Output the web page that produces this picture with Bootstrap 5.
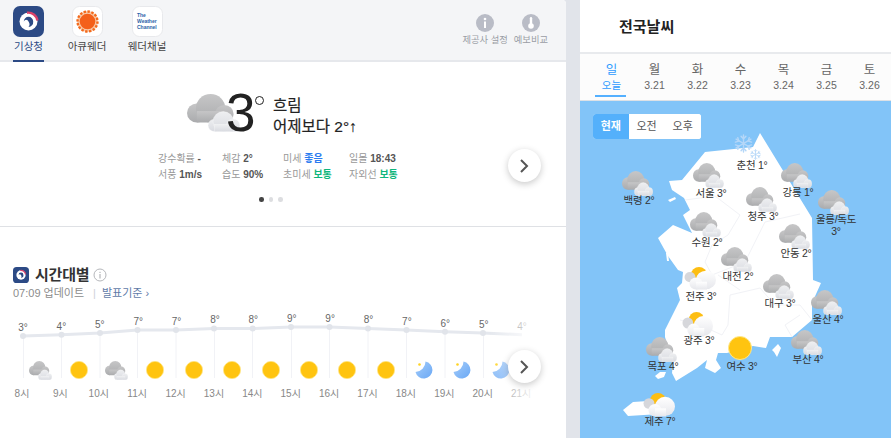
<!doctype html>
<html lang="ko">
<head>
<meta charset="utf-8">
<title>날씨</title>
<link href="https://cdn.jsdelivr.net/npm/bootstrap@5.3.0/dist/css/bootstrap.min.css" rel="stylesheet">
<style>
html,body{height:100%;overflow:hidden}
body{font-family:"Liberation Sans","Noto Sans CJK KR",sans-serif;background:#e1e4ea;color:#222}
.shell{height:438px;width:891px;overflow:hidden}
.leftp{width:566px;background:#fff;border-top-right-radius:4px;overflow:hidden;flex:none}
.rightp{width:311px;margin-left:14px;background:#fff;flex:none}
.topb{height:62px;background:#f4f5f7;border-bottom:2px solid #e6e8ec;position:relative}
.tabi{color:#444;font-size:10.5px;line-height:13px;white-space:nowrap;padding-top:6px;height:60px}
.tabi svg{display:block;margin-bottom:3px}
.t1{width:31px;margin-left:13px;color:#2c4a85;border-bottom:2px solid #2c4a85;height:62px}
.t2{width:40px;margin-left:23px}
.t3{width:40px;margin-left:20px}
.toolr{margin-left:auto;padding-right:18px;gap:6px}
.tooli{color:#9a9da5;font-size:9.3px;line-height:12px;white-space:nowrap;padding-top:14px}
.tooli svg{display:block;margin-bottom:2px}
.hero{height:165px;border-bottom:1px solid #dfe1e5;position:relative}
.nowrow{padding:32px 0 0 187px;height:89px}
.bigt{font-size:53px;line-height:48px;margin:-5px 0 0 -14px;width:31px;font-weight:400;letter-spacing:-1px}
.deg{width:9px;height:9px;border:1.5px solid #222;border-radius:50%;margin:2px 0 0 -2px;flex:none}
.nowtx{margin-left:9px;font-size:15.5px;line-height:21px;color:#222;padding-top:1px;-webkit-text-stroke:.2px #222;white-space:nowrap}
.statg{padding-left:158px;font-size:10px;line-height:16px;color:#999;gap:0}
.statg b{color:#555;font-weight:700}
.sc1{width:64px}.sc2{width:61px}.sc3{width:66px}
.gd{color:#2b7cf0!important}.ok{color:#0fb67c!important}
.dots{gap:5px;margin:14px 0 0 259px}
.dots i{width:4.5px;height:4.5px;border-radius:50%;background:#dcdde0;display:block}
.dots i:first-child{background:#444}
.roundb{width:33px;height:33px;padding:0;border-radius:50%;background:#fff;border:0;box-shadow:0 2px 7px rgba(0,0,0,.22);position:absolute;display:flex;align-items:center;justify-content:center;z-index:3}
.hb1{left:507.5px;top:87px}
.hb2{left:507.5px;top:39px}
.hourp{padding-top:38px}
.hhead{padding-left:13px;height:20px}
.htitle{font-size:15px;font-weight:700;color:#333;margin-left:6px;letter-spacing:-.2px}
.upd{padding-left:13px;font-size:11px;color:#8c8c8c;line-height:14px;margin-top:1px}
.upd span{color:#cfd2d8;margin:0 6px 0 9px}
.upd a{color:#5f7ba8;text-decoration:none}
.chart{position:relative;height:105px;margin-top:11px;width:566px;overflow:hidden}
.chart>svg{position:absolute;left:0;top:0}
.temps{position:relative;height:50px;padding-left:3.8px}
.hc{width:38.4px;flex:none;text-align:center;font-size:10px;color:#666;line-height:12px}
.icons{position:relative;height:18px;padding-left:21px}
.icons svg{display:block;margin:0 auto}
.times{position:relative;margin-top:9px;padding-left:2.8px}
.times .hc{color:#888}
.fadeo{position:absolute;left:490px;top:0;width:50px;height:105px;background:linear-gradient(90deg,rgba(255,255,255,0),rgba(255,255,255,.85) 80%);z-index:2}
.rhead{height:54px;border-bottom:2px solid #e8eaed;padding-left:39px;font-size:15px;font-weight:700;color:#222;line-height:54px}
.dayb{height:47px;background:#fcfcfc;padding-left:10px;border-bottom:1px solid #dde1e6}
.dayi{width:43px;text-align:center;color:#666;font-size:12.5px;line-height:15px;padding-top:9px;position:relative}
.dayi small{display:block;font-size:10.5px;line-height:14px;color:#666}
.dayi.act,.dayi.act small{color:#2f9bff}
.dayi.act::after{content:"";position:absolute;left:5px;right:7px;top:41px;height:1.5px;background:#54b0ff}
.mapw{position:relative;height:337px;background:#82c4f8;overflow:hidden}
.mapw>svg.base{position:absolute;left:0;top:0}
.seg{position:absolute;left:13px;top:13px;height:25px;background:#fff;border-radius:3px}
.seg .btn{font-size:11px;padding:0;width:36.7px;height:25px;line-height:25px;border:0;border-right:1px solid #eee;border-radius:0;color:#555;background:#fff}
.seg .btn:last-child{border-right:0;border-radius:0 3px 3px 0}
.seg .btn.on{background:#54b0fb;color:#fff;font-weight:700;border-radius:3px 0 0 3px}
.ico{position:absolute}
.lab{position:absolute;width:60px;text-align:center;font-size:10.5px;line-height:12px;color:#333;letter-spacing:-.3px;margin-top:1px}
</style>
</head>
<body>
<svg width="0" height="0" class="position-absolute">
<defs>
<linearGradient id="g1" x1="0" y1="0" x2="0" y2="1"><stop offset="0" stop-color="#c6c6c7"/><stop offset="1" stop-color="#aaabad"/></linearGradient>
<linearGradient id="g2" x1="0" y1="0" x2="0" y2="1"><stop offset="0" stop-color="#eeeff1"/><stop offset="1" stop-color="#d8dae0"/></linearGradient>
<linearGradient id="g3" x1="0" y1="0" x2="0" y2="1"><stop offset="0" stop-color="#ffffff"/><stop offset="1" stop-color="#e6e7ec"/></linearGradient>
<linearGradient id="g4" x1="0" y1="0" x2="1" y2="1"><stop offset="0" stop-color="#a5cdfa"/><stop offset="1" stop-color="#6aa8f5"/></linearGradient>
<symbol id="cl" viewBox="0 0 54 40" preserveAspectRatio="none">
<g fill="url(#g1)"><circle cx="10" cy="20" r="10"/><circle cx="24" cy="15" r="15"/><circle cx="38" cy="21" r="9.500"/><rect x="10" y="18" width="28" height="12"/></g>
<g fill="url(#g2)" stroke="#fff" stroke-opacity=".5" stroke-width=".6"><circle cx="28" cy="33" r="6.500"/><circle cx="37" cy="29" r="10.500"/><circle cx="47" cy="33" r="6.800"/><rect x="28" y="32" width="19" height="7.700"/></g>
</symbol>
<symbol id="sc" viewBox="0 0 32 25" preserveAspectRatio="none">
<circle cx="15" cy="8" r="8" fill="#fdbe12"/><circle cx="6" cy="11" r="5.500" fill="#d6d7db"/>
<g fill="url(#g3)"><circle cx="22" cy="14" r="10"/><circle cx="12" cy="18" r="6.500"/><rect x="12" y="16" width="11" height="8.500"/></g>
</symbol>
<symbol id="sn" viewBox="0 0 20 20"><circle cx="10" cy="10" r="9.600" fill="#ffc410" stroke="#ffe88a" stroke-width=".8"/></symbol>
<symbol id="mn" viewBox="0 0 18 18"><path d="M10.500 .5A8.600 8.600 0 1 1 .5 11 10.500 10.500 0 0 0 10.500 .5Z" fill="url(#g4)"/><circle cx="4.500" cy="3.500" r="1.300" fill="#ffd321"/></symbol>
<symbol id="fl" viewBox="0 0 20 20"><g stroke="#b5d7f8" stroke-width="1.500" stroke-linecap="round"><path d="M10 1v18M2.200 5.500l15.600 9M2.200 14.500l15.600-9"/><path d="M7.500 2.500 10 5l2.500-2.500M7.500 17.500 10 15l2.500 2.500M1.500 8.500 5 7.500 4 4M18.500 11.500 15 12.500l1 3.500M1.500 11.500 5 12.500 4 16M18.500 8.500 15 7.500l1-3.500" fill="none"/></g></symbol>
<symbol id="kma" viewBox="0 0 31 31"><rect width="31" height="31" rx="7" fill="#2c4a85"/><circle cx="15.500" cy="15.500" r="9" fill="#fff"/><path d="M14 6.800A9 9 0 0 1 24.400 14.500" fill="none" stroke="#d9426a" stroke-width="2.400"/><path d="M10.800 15.500A4.700 4.700 0 0 1 20.200 15.500 5 5 0 0 1 15.500 21 4.500 4.500 0 0 0 15.500 15.500 2.500 2.500 0 0 0 10.800 15.500Z" fill="#2c4a85"/></symbol>
</defs>
</svg>
<div class="shell d-flex">
 <div class="leftp">
  <div class="topb d-flex">
   <div class="tabi t1 d-flex flex-column align-items-center"><svg width="31" height="31"><use href="#kma"/></svg>기상청</div>
   <div class="tabi t2 d-flex flex-column align-items-center">
    <svg width="31" height="31" viewBox="0 0 31 31"><rect x=".5" y=".5" width="30" height="30" rx="7" fill="#fff" stroke="#e8e9ec"/><circle cx="15.500" cy="15.500" r="10.500" fill="#f8c9a8"/><circle cx="15.500" cy="15.500" r="10" fill="none" stroke="#f46a1c" stroke-width="2.400" stroke-dasharray="2.400 1.500"/><circle cx="15.500" cy="15.500" r="7.800" fill="#f4601a"/></svg>아큐웨더</div>
   <div class="tabi t3 d-flex flex-column align-items-center">
    <svg width="31" height="31" viewBox="0 0 31 31"><rect x=".5" y=".5" width="30" height="30" rx="7" fill="#fff" stroke="#e8e9ec"/><text x="5" y="10.500" font-size="5" font-weight="700" fill="#2a5fa8" font-family="Liberation Sans">The</text><text x="5" y="16.500" font-size="5" font-weight="700" fill="#2a5fa8" font-family="Liberation Sans">Weather</text><text x="5" y="22.500" font-size="5" font-weight="700" fill="#2a5fa8" font-family="Liberation Sans">Channel</text></svg>웨더채널</div>
   <div class="toolr d-flex">
    <div class="tooli d-flex flex-column align-items-center"><svg width="18" height="18" viewBox="0 0 18 18"><circle cx="9" cy="9" r="9" fill="#b9bcc6"/><circle cx="9" cy="5" r="1.300" fill="#fff"/><rect x="8" y="7.500" width="2" height="6.500" fill="#fff"/></svg>제공사 설정</div>
    <div class="tooli d-flex flex-column align-items-center"><svg width="18" height="18" viewBox="0 0 18 18"><circle cx="9" cy="9" r="9" fill="#b9bcc6"/><rect x="7.800" y="3" width="2.400" height="8" rx="1.200" fill="#fff"/><circle cx="9" cy="12" r="2.800" fill="#fff"/></svg>예보비교</div>
   </div>
  </div>
  <div class="hero">
   <div class="nowrow d-flex align-items-start">
    <svg width="53" height="38"><use href="#cl"/></svg>
    <div class="bigt">3</div><div class="deg"></div>
    <div class="nowtx">흐림<br>어제보다 2°↑</div>
   </div>
   <div class="statg d-flex">
    <div class="sc1"><div>강수확률 <b>-</b></div><div>서풍 <b>1m/s</b></div></div>
    <div class="sc2"><div>체감 <b>2°</b></div><div>습도 <b>90%</b></div></div>
    <div class="sc3"><div>미세 <b class="gd">좋음</b></div><div>초미세 <b class="ok">보통</b></div></div>
    <div><div>일몰 <b>18:43</b></div><div>자외선 <b class="ok">보통</b></div></div>
   </div>
   <div class="dots d-flex"><i></i><i></i><i></i></div>
   <button class="roundb hb1" aria-label="다음"><svg width="10" height="16" viewBox="0 0 10 16"><path d="M2 2l6 6-6 6" fill="none" stroke="#555" stroke-width="2"/></svg></button>
  </div>
  <div class="hourp">
   <div class="hhead d-flex align-items-center">
    <svg width="16" height="16"><use href="#kma"/></svg>
    <span class="htitle">시간대별</span>
    <svg class="ms-1" width="14" height="14" viewBox="0 0 14 14"><circle cx="7" cy="7" r="6" fill="none" stroke="#b5b7bb"/><rect x="6.500" y="6" width="1" height="4.500" fill="#a5a7ab"/><rect x="6.500" y="3.800" width="1" height="1.200" fill="#a5a7ab"/></svg>
   </div>
   <div class="upd">07:09 업데이트<span>|</span><a href="#">발표기준 ›</a></div>
   <div class="chart">
    <svg width="566" height="105" viewBox="0 310 566 105">
     <g stroke="#f1f2f6" fill="none"><path d="M23.500 335V377M61.500 334V377M100 332V377M137.500 329V377M176 329V377M214.500 327V377M252.500 327V377M291.500 326V377M329.500 326V377M368 327V377M406.500 329V377M445 331V377M483.500 332V377"/></g>
     <path d="M23 335L61.500 333.700 100 332 137.500 329 176 329 214 327.500 252.700 327.500 291 326 329.500 326 368 327.500 406.500 329 445 330.700 483 332 522 333.700" fill="none" stroke="#e5e8ee" stroke-width="3"/>
     <g fill="#e1e4ea"><circle cx="23" cy="335" r="3"/><circle cx="61.500" cy="333.700" r="3"/><circle cx="100" cy="332" r="3"/><circle cx="137.500" cy="329" r="3"/><circle cx="176" cy="329" r="3"/><circle cx="214" cy="327.500" r="3"/><circle cx="252.700" cy="327.500" r="3"/><circle cx="291" cy="326" r="3"/><circle cx="329.500" cy="326" r="3"/><circle cx="368" cy="327.500" r="3"/><circle cx="406.500" cy="329" r="3"/><circle cx="445" cy="330.700" r="3"/><circle cx="483" cy="332" r="3"/></g>
    </svg>
    <div class="temps d-flex">
     <div class="hc" style="margin-top:11px">3°</div><div class="hc" style="margin-top:10px">4°</div><div class="hc" style="margin-top:8px">5°</div><div class="hc" style="margin-top:5px">7°</div><div class="hc" style="margin-top:5px">7°</div><div class="hc" style="margin-top:3px">8°</div><div class="hc" style="margin-top:3px">8°</div><div class="hc" style="margin-top:2px">9°</div><div class="hc" style="margin-top:2px">9°</div><div class="hc" style="margin-top:3px">8°</div><div class="hc" style="margin-top:5px">7°</div><div class="hc" style="margin-top:7px">6°</div><div class="hc" style="margin-top:8px">5°</div><div class="hc" style="margin-top:10px">4°</div>
    </div>
    <div class="icons d-flex">
     <div class="hc"><svg width="23" height="19"><use href="#cl"/></svg></div>
     <div class="hc"><svg width="18" height="18"><use href="#sn"/></svg></div>
     <div class="hc"><svg width="23" height="19"><use href="#cl"/></svg></div>
     <div class="hc"><svg width="18" height="18"><use href="#sn"/></svg></div>
     <div class="hc"><svg width="18" height="18"><use href="#sn"/></svg></div>
     <div class="hc"><svg width="18" height="18"><use href="#sn"/></svg></div>
     <div class="hc"><svg width="18" height="18"><use href="#sn"/></svg></div>
     <div class="hc"><svg width="18" height="18"><use href="#sn"/></svg></div>
     <div class="hc"><svg width="18" height="18"><use href="#sn"/></svg></div>
     <div class="hc"><svg width="18" height="18"><use href="#sn"/></svg></div>
     <div class="hc"><svg width="18" height="18"><use href="#mn"/></svg></div>
     <div class="hc"><svg width="18" height="18"><use href="#mn"/></svg></div>
     <div class="hc"><svg width="18" height="18"><use href="#mn"/></svg></div>
    </div>
    <div class="times d-flex">
     <div class="hc">8시</div><div class="hc">9시</div><div class="hc">10시</div><div class="hc">11시</div><div class="hc">12시</div><div class="hc">13시</div><div class="hc">14시</div><div class="hc">15시</div><div class="hc">16시</div><div class="hc">17시</div><div class="hc">18시</div><div class="hc">19시</div><div class="hc">20시</div><div class="hc">21시</div>
    </div>
    <div class="fadeo"></div>
    <button class="roundb hb2" aria-label="다음"><svg width="10" height="16" viewBox="0 0 10 16"><path d="M2 2l6 6-6 6" fill="none" stroke="#555" stroke-width="2"/></svg></button>
   </div>
  </div>
 </div>
 <div class="rightp">
  <div class="rhead">전국날씨</div>
  <div class="dayb d-flex">
   <div class="dayi act">일<small>오늘</small></div>
   <div class="dayi">월<small>3.21</small></div>
   <div class="dayi">화<small>3.22</small></div>
   <div class="dayi">수<small>3.23</small></div>
   <div class="dayi">목<small>3.24</small></div>
   <div class="dayi">금<small>3.25</small></div>
   <div class="dayi">토<small>3.26</small></div>
  </div>
  <div class="mapw">
   <svg class="base" width="311" height="337" viewBox="580 101 311 337">
    <g fill="#fff">
     <path d="M760 133L812 218 813 280 821 283 812 303 812 320 792 337 770 337 766 348 753 346 727 353 718 353 716 360 721 368 715 373 705 368 707 360 697 368 676 381 672 373 673 363 665 337 665 330 680 300 677 288 682 283 683 272 678 270 668 256 658 238 673 225 692 233 683 215 690 210 684 198 672 190 669 181 682 180 705 152 753 147Z"/>
     <path d="M623 410L633 402 648 401 673 403 672 410 660 414 628 416Z"/>
     <path d="M772 350L778 344 781 348 777 357 774 352Z"/>
     <path d="M655 376L660 372 666 372 664 377 658 379Z"/>
     <path d="M668 200L675 197 676 199 670 202Z"/>
     <path d="M666 253L668 253 669 261 667 261Z"/>
    </g>
    <g fill="none" stroke="#f1f2f6"><path d="M685 200L715 196 740 215 728 235 712 245 705 262 712 275 745 262 765 222 800 214"/><path d="M730 295L728 325 722 335 700 325 680 320M730 295L760 288 775 305 800 305 812 320M792 337L785 325 800 315"/><path d="M718 275L740 290"/></g>
   </svg>
   <div class="seg btn-group" role="group"><button class="btn on">현재</button><button class="btn">오전</button><button class="btn">오후</button></div>

   <svg class="ico" style="left:154px;top:33px" width="19" height="19"><use href="#fl"/></svg>
   <svg class="ico" style="left:170px;top:48px" width="11" height="11"><use href="#fl"/></svg>
   <svg class="ico" style="left:42px;top:70px" width="31" height="25"><use href="#cl"/></svg>
   <svg class="ico" style="left:113px;top:62px" width="31" height="25"><use href="#cl"/></svg>
   <svg class="ico" style="left:201px;top:62px" width="31" height="25"><use href="#cl"/></svg>
   <svg class="ico" style="left:166px;top:86px" width="31" height="25"><use href="#cl"/></svg>
   <svg class="ico" style="left:238px;top:89px" width="31" height="25"><use href="#cl"/></svg>
   <svg class="ico" style="left:110px;top:111px" width="31" height="25"><use href="#cl"/></svg>
   <svg class="ico" style="left:199px;top:123px" width="31" height="25"><use href="#cl"/></svg>
   <svg class="ico" style="left:141px;top:146px" width="31" height="25"><use href="#cl"/></svg>
   <svg class="ico" style="left:104px;top:166px" width="32" height="23"><use href="#sc"/></svg>
   <svg class="ico" style="left:183px;top:173px" width="31" height="25"><use href="#cl"/></svg>
   <svg class="ico" style="left:231px;top:189px" width="31" height="25"><use href="#cl"/></svg>
   <svg class="ico" style="left:102px;top:211px" width="31" height="25"><use href="#sc"/></svg>
   <svg class="ico" style="left:211px;top:229px" width="31" height="25"><use href="#cl"/></svg>
   <svg class="ico" style="left:66px;top:236px" width="31" height="25"><use href="#cl"/></svg>
   <svg class="ico" style="left:148px;top:235px" width="24" height="24"><use href="#sn"/></svg>
   <svg class="ico" style="left:63px;top:292px" width="32" height="24"><use href="#sc"/></svg>

   <div class="lab" style="left:142px;top:57px">춘천 1°</div>
   <div class="lab" style="left:29px;top:92px">백령 2°</div>
   <div class="lab" style="left:101px;top:85px">서울 3°</div>
   <div class="lab" style="left:188px;top:84px">강릉 1°</div>
   <div class="lab" style="left:153px;top:108px">청주 3°</div>
   <div class="lab" style="left:226px;top:111px">울릉/독도<br>3°</div>
   <div class="lab" style="left:97px;top:134px">수원 2°</div>
   <div class="lab" style="left:186px;top:145px">안동 2°</div>
   <div class="lab" style="left:128px;top:168px">대전 2°</div>
   <div class="lab" style="left:91px;top:188px">전주 3°</div>
   <div class="lab" style="left:170px;top:195px">대구 3°</div>
   <div class="lab" style="left:218px;top:211px">울산 4°</div>
   <div class="lab" style="left:89px;top:232px">광주 3°</div>
   <div class="lab" style="left:132px;top:258px">여수 3°</div>
   <div class="lab" style="left:198px;top:251px">부산 4°</div>
   <div class="lab" style="left:53px;top:258px">목포 4°</div>
   <div class="lab" style="left:50px;top:313px">제주 7°</div>
  </div>
 </div>
</div>
<script src="https://cdn.jsdelivr.net/npm/bootstrap@5.3.0/dist/js/bootstrap.bundle.min.js"></script>
</body>
</html>
